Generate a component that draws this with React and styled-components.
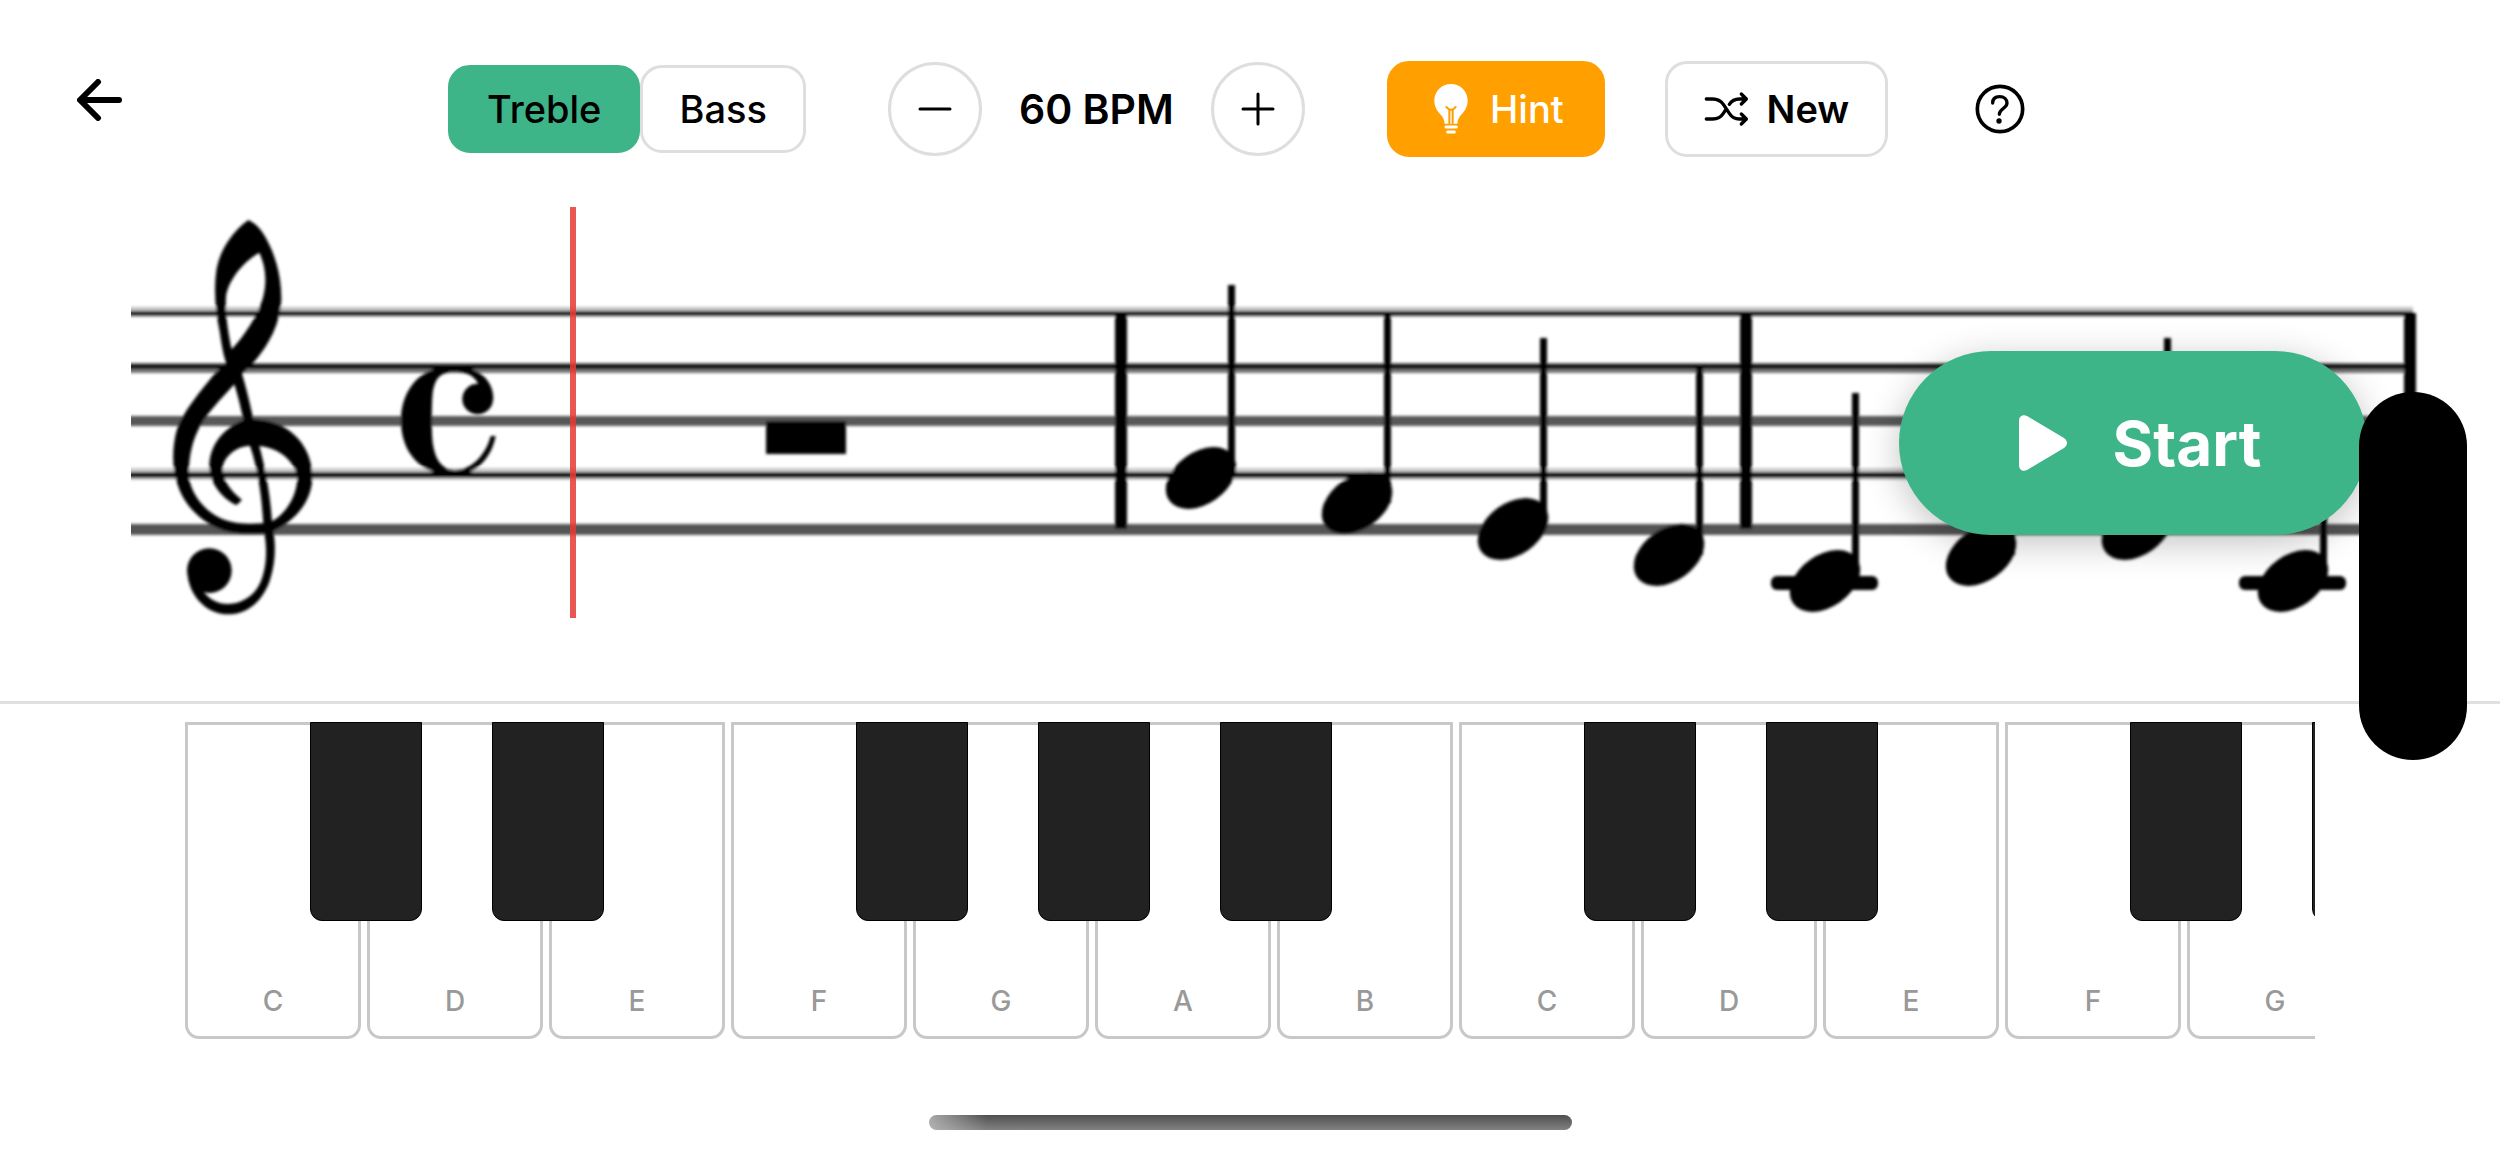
import React, { useState } from 'react'
import styled, { createGlobalStyle } from 'styled-components'

const GlobalStyle = createGlobalStyle`
* {
  box-sizing: border-box;
}
body {
  margin: 0;
  background: #fff;
  color: #000;
  font-family: Inter, "Liberation Sans", sans-serif;
}
button {
  font-family: inherit;
  color: inherit;
  padding: 0;
  margin: 0;
  border: none;
  background: none;
  cursor: pointer;
}
svg {
  display: block;
}
`;

const Page = styled.div`
  position: relative;
  display: flex;
  flex-direction: column;
  min-height: 100vh;
  overflow: hidden;
`;

const Toolbar = styled.header`
  display: grid;
  grid-template-columns: 1fr auto 1fr;
  align-items: start;
  padding: 61px 77px 50px;
`;

const BackButton = styled.button`
  justify-self: start;
  height: 78px;
  display: flex;
  align-items: center;
`;

const Controls = styled.div`
  display: flex;
  align-items: center;
  height: 96px;
`;

const ClefSwitch = styled.div`
  display: flex;
  margin-right: 82px;
`;

const ClefButton = styled.button`
  height: 88px;
  padding: 0 36px;
  border: 3px solid ${({ $active }) => ($active ? '#3eb489' : '#dedede')};
  border-radius: 22px;
  background: ${({ $active }) => ($active ? '#3eb489' : '#fff')};
  font-size: 38px;
  font-weight: 500;
`;

const Tempo = styled.div`
  display: flex;
  align-items: center;
  justify-content: space-between;
  width: 417px;
  margin-right: 82px;
  font-size: 41px;
  font-weight: 600;
`;

const RoundButton = styled.button`
  display: flex;
  align-items: center;
  justify-content: center;
  width: 94px;
  height: 94px;
  border: 3px solid #dedede;
  border-radius: 50%;
`;

const ActionButton = styled.button`
  display: flex;
  align-items: center;
  justify-content: center;
  gap: ${({ $primary }) => ($primary ? 22 : 18)}px;
  width: ${({ $primary }) => ($primary ? 218 : 223)}px;
  height: 96px;
  margin-right: 60px;
  padding-left: ${({ $primary }) => ($primary ? 6 : 0)}px;
  border: 3px solid ${({ $primary }) => ($primary ? '#ffa000' : '#dedede')};
  border-radius: 22px;
  background: ${({ $primary }) => ($primary ? '#ffa000' : '#fff')};
  color: ${({ $primary }) => ($primary ? '#fff' : '#000')};
  font-size: 38px;
  font-weight: ${({ $primary }) => ($primary ? 500 : 600)};
`;

const HelpButton = styled.button`
  display: flex;
  align-items: center;
  justify-content: center;
  width: 104px;
  height: 96px;
`;

const Score = styled.section`
  position: relative;
  padding: 0 81px 83px 131px;
  border-bottom: 3px solid #e0e0e0;
`;

const StartButton = styled.button`
  position: absolute;
  top: 144px;
  right: 133px;
  display: flex;
  align-items: center;
  justify-content: center;
  gap: 46px;
  width: 468px;
  height: 184px;
  padding-left: 14px;
  border-radius: 92px;
  background: #3eb489;
  color: #fff;
  font-size: 62px;
  font-weight: 700;
  box-shadow: 0 8px 36px rgba(0, 0, 0, 0.24);
`;

const Island = styled.div`
  position: absolute;
  top: 392px;
  right: 33px;
  width: 108px;
  height: 368px;
  border-radius: 54px;
  background: #000;
`;

const Keyboard = styled.section`
  margin: 18px 185px 0;
  display: flex;
  gap: 6px;
  overflow: hidden;
`;

const KeySlot = styled.div`
  position: relative;
  flex: none;
`;

const WhiteKey = styled.button`
  display: flex;
  align-items: flex-end;
  justify-content: center;
  width: 176px;
  height: 317px;
  padding-bottom: 18px;
  border: 3px solid #c8c8c8;
  border-radius: 0 0 14px 14px;
  background: #fff;
  color: #999;
  font-size: 28px;
  font-weight: 500;
  line-height: 34px;
`;

/* sits over the gap between two white keys */
const BlackKey = styled.button`
  position: absolute;
  top: 0;
  left: 125px;
  z-index: 1;
  width: 112px;
  height: 199px;
  border: 1px solid #000;
  border-radius: 0 0 12px 12px;
  background: #222;
`;

const HomeBar = styled.div`
  width: 643px;
  height: 15px;
  margin: auto auto 23px;
  border-radius: 8px;
  background:
    linear-gradient(90deg, rgba(190, 190, 190, 0.8), rgba(190, 190, 190, 0) 9%),
    linear-gradient(#4f4f4f, #828282);
`;

const staffLines = [
  { y: 307, h: 10, fill: '#c4c4c4' },
  { y: 311, h: 5, fill: '#000' },
  { y: 363, h: 10, fill: '#777' },
  { y: 364, h: 5, fill: '#000' },
  { y: 416, h: 10, fill: '#585858' },
  { y: 468, h: 12, fill: '#ccc' },
  { y: 472, h: 6, fill: '#000' },
  { y: 524, h: 11, fill: '#545454' },
];

const bars = [1121, 1746, 2410];

const notes = [
  { x: 1201, y: 478, stem: 285 },
  { x: 1357, y: 503, stem: 314 },
  { x: 1513, y: 529, stem: 338 },
  { x: 1669, y: 555, stem: 366 },
  { x: 1825, y: 581, stem: 393, ledger: true },
  { x: 1981, y: 555, stem: 366 },
  { x: 2137, y: 529, stem: 338 },
  { x: 2293, y: 581, stem: 393, ledger: true },
];

const whiteKeys = ['C', 'D', 'E', 'F', 'G', 'A', 'B', 'C', 'D', 'E', 'F', 'G'];

function Note({ x, y, stem, ledger }) {
  return (
    <g>
      <rect x={x + 27} y={stem} width="7" height={y - stem} />
      <ellipse cx={x} cy={y} rx="39" ry="26" transform={`rotate(-35 ${x} ${y})`} />
      {ledger && <rect x={x - 54} y="576" width="107" height="14" rx="6" />}
    </g>
  )
}

function Staff() {
  return (
    <svg viewBox="131 207 2288 411" width="100%" role="img" aria-label="Score">
      <defs>
        <filter id="soft" filterUnits="userSpaceOnUse" x="100" y="180" width="2340" height="460">
          <feGaussianBlur stdDeviation="1.7" />
        </filter>
      </defs>
      <g filter="url(#soft)">
        {staffLines.map(({ y, h, fill }) => (
          <rect key={y} x="120" y={y} width="2293" height={h} fill={fill} />
        ))}
        {bars.map(x => (
          <rect key={x} x={x - 6} y="313" width="12" height="216" />
        ))}
        <g transform="translate(120 200) scale(0.33333)">
          {/* treble clef */}
          <path
            fillRule="evenodd"
            d="M385 60C340 92 302 145 290 205C281 265 285 330 300 400C305 440 312 470 318 488L285 520C240 575 190 635 172 685C155 740 155 810 175 860C197 925 262 985 340 998C370 1003 410 1003 433 1000C442 1050 440 1105 420 1150C400 1192 360 1212 325 1212C292 1212 267 1197 248 1172L203 1130C215 1200 268 1243 325 1243C385 1243 430 1200 450 1140C466 1090 468 1040 460 993C530 960 577 900 577 830C577 740 510 660 400 658C390 610 378 560 366 522L400 489C450 430 480 370 484 300C485 220 462 160 442 122C427 92 408 70 385 60Z
            M418 158C370 185 325 240 318 290C315 340 325 400 335 448C375 405 410 350 427 300C442 250 438 200 418 158Z
            M343 553C300 600 250 650 230 700C212 740 205 790 207 830C212 880 255 938 315 960C350 973 390 972 430 970C425 890 415 810 390 738C350 738 310 770 308 805C308 840 330 872 366 900L350 915C308 898 270 850 268 800C268 735 310 685 370 660C362 620 353 585 343 553Z
            M418 738C440 820 452 900 456 964C505 935 532 880 532 830C524 785 478 743 418 738Z"
          />
          <circle cx="268" cy="1112" r="67" />
          {/* common time */}
          <path d="M1120 600C1122 545 1080 498 1000 498C900 498 843 570 843 662C843 755 900 826 1005 826C1065 826 1115 775 1127 708L1112 708C1097 765 1055 810 1005 810C958 810 938 765 936 700C935 660 935 610 938 580C945 530 965 517 1000 516C1035 516 1060 522 1075 552Z" />
          <circle cx="1073" cy="597" r="46" />
        </g>
        <rect x="766" y="421" width="80" height="33" />
        {notes.map(note => (
          <Note key={note.x} {...note} />
        ))}
      </g>
      <rect x="570" y="207" width="6" height="411" fill="#e53935" fillOpacity="0.85" />
    </svg>
  )
}

function ArrowIcon() {
  return (
    <svg width="46" height="42" fill="none" stroke="#000" strokeWidth="6" strokeLinecap="round" strokeLinejoin="round">
      <path d="M42 21H4M21 3L3 21L21 39" />
    </svg>
  )
}

function SignIcon({ plus }) {
  return (
    <svg width="36" height="36" fill="none" stroke="#000" strokeWidth="3" strokeLinecap="round">
      <path d={plus ? 'M3 18H33M18 3V33' : 'M3 18H33'} />
    </svg>
  )
}

function BulbIcon() {
  return (
    <svg width="34" height="52" viewBox="31 25 102 156">
      <path fill="#fff" d="M82 28C54 28 32 50 32 78C32 95 40 108 50 119C59 129 62 136 63 147H101C102 136 105 129 114 119C124 108 132 95 132 78C132 50 110 28 82 28Z" />
      <path fill="none" stroke="#ffa000" strokeWidth="6" strokeLinecap="round" strokeLinejoin="round" d="M77 146V105L68 97M87 146V105L96 97M77 104Q82 107 87 104" />
      <path stroke="#fff" strokeWidth="9" strokeLinecap="round" d="M67 157H98M72 172H92" />
    </svg>
  )
}

function ShuffleIcon() {
  return (
    <svg width="45" height="36" viewBox="846 48 135 108" fill="none" stroke="#000" strokeWidth="10" strokeLinecap="round" strokeLinejoin="round">
      <path d="M853 72H872C888 72 897 78 904 88L922 115C929 126 938 132 952 132H972M853 132H872C888 132 897 126 904 115L912 103M922 88C929 77 938 72 952 72H972M958 57L973 72L958 87M958 117L973 132L958 147" />
    </svg>
  )
}

function HelpIcon() {
  return (
    <svg width="52" height="52" viewBox="34 25 156 156" fill="none" stroke="#000" strokeLinecap="round">
      <circle cx="112" cy="103" r="68" strokeWidth="11" />
      <path strokeWidth="10" d="M90 85C90 72 99 66 111 66C124 66 133 74 133 85C133 101 110 102 110 119" />
      <circle cx="109" cy="139" r="8" fill="#000" stroke="none" />
    </svg>
  )
}

function PlayIcon() {
  return (
    <svg width="48" height="56" fill="#fff">
      <path d="M0 6C0 1 4 -1 8 1L45 23C49 26 49 30 45 33L8 55C4 57 0 55 0 50Z" />
    </svg>
  )
}

export default function App() {
  const [clef, setClef] = useState('Treble');
  const [bpm, setBpm] = useState(60);

  return (
    <Page>
      <GlobalStyle />
      <Toolbar>
        <BackButton aria-label="Back"><ArrowIcon /></BackButton>
        <Controls>
          <ClefSwitch>
            {['Treble', 'Bass'].map(name => (
              <ClefButton key={name} $active={clef === name} onClick={() => setClef(name)}>
                {name}
              </ClefButton>
            ))}
          </ClefSwitch>
          <Tempo>
            <RoundButton aria-label="Slower" onClick={() => setBpm(bpm - 5)}><SignIcon /></RoundButton>
            <span>{bpm} BPM</span>
            <RoundButton aria-label="Faster" onClick={() => setBpm(bpm + 5)}><SignIcon plus /></RoundButton>
          </Tempo>
          <ActionButton $primary><BulbIcon />Hint</ActionButton>
          <ActionButton><ShuffleIcon />New</ActionButton>
          <HelpButton aria-label="Help"><HelpIcon /></HelpButton>
        </Controls>
      </Toolbar>
      <Score>
        <Staff />
        <StartButton><PlayIcon />Start</StartButton>
      </Score>
      <Keyboard>
        {whiteKeys.map((name, i) => (
          <KeySlot key={i}>
            <WhiteKey>{name}</WhiteKey>
            {!'EB'.includes(name) && <BlackKey aria-label={`${name} sharp`} />}
          </KeySlot>
        ))}
      </Keyboard>
      <HomeBar />
      <Island />
    </Page>
  )
}
